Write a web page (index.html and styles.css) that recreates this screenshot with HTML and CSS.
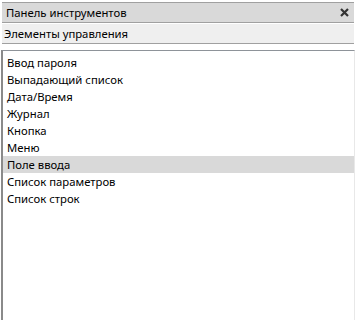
FILE: index.html
```html
<!DOCTYPE html>
<html lang="ru">
<head>
    <meta charset="UTF-8">
    <meta name="viewport" content="width=device-width, initial-scale=1.0">
    <title>Панель инструментов</title>
    <link rel="stylesheet" href="styles.css">
</head>
<body>
    <div class="panel">
        <div class="titlebar">
            <span class="title">Панель инструментов</span>
            <span class="close">
                <svg width="9" height="9" viewBox="0 0 9 9">
                    <path d="M1 1L8 8M8 1L1 8" stroke="#333" stroke-width="2.2"/>
                </svg>
            </span>
        </div>
        <div class="toolbar">Элементы управления</div>
        <ul class="list">
            <li>Ввод пароля</li>
            <li>Выпадающий список</li>
            <li>Дата/Время</li>
            <li>Журнал</li>
            <li>Кнопка</li>
            <li>Меню</li>
            <li class="selected">Поле ввода</li>
            <li>Список параметров</li>
            <li>Список строк</li>
        </ul>
    </div>
</body>
</html>
```

FILE: styles.css
```css
body{
    margin: 0;
    background: #fff;
    font-family: "Noto Sans", "DejaVu Sans", sans-serif;
    font-size: 11.3px;
    color: #000;
}
.panel{
    height: 320px;
    display: flex;
    flex-direction: column;
    padding-top: 2px;
    box-sizing: border-box;
}
.titlebar{
    display: flex;
    align-items: center;
    justify-content: space-between;
    height: 19px;
    margin: 0 2px;
    padding: 0 5px 0 4px;
    background: #d9d9d9;
    border-top: 1px solid #a0a0a0;
    border-bottom: 1px solid #a0a0a0;
}
.close{
    display: flex;
}
.toolbar{
    height: 19px;
    line-height: 19px;
    margin: 1px 2px 0;
    padding: 0 2px;
    background: #efefef;
    border-bottom: 1px solid #a0a0a0;
}
.list{
    flex: 1;
    list-style: none;
    margin: 6px 1px 0;
    padding: 3px 0 0;
    border-top: 1px solid #8e9399;
    border-left: 2px solid #8a8a8a;
    border-right: 1px solid #e8e8e8;
}
.list li{
    height: 17px;
    line-height: 17px;
    padding-left: 4px;
}
.list li.selected{
    background: #d9d9d9;
}
```
